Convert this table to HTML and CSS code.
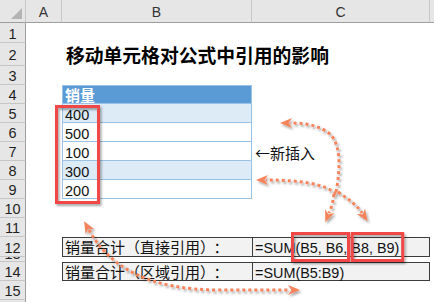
FILE: index.html
```html
<!DOCTYPE html>
<html lang="zh-CN">
<head>
<meta charset="utf-8">
<title>移动单元格对公式中引用的影响</title>
<link rel="stylesheet" href="styles.css">
</head>
<body>
<div class="sheet">
  <div class="corner"></div><div class="ch">A</div><div class="ch">B</div><div class="ch">C</div><div class="ch end"></div>

  <div class="rh">1</div><div class="c"></div><div class="c"></div><div class="c"></div><div class="c"></div>
  <div class="rh">2</div><div class="c"></div><div class="c title-cell"><span class="title">移动单元格对公式中引用的影响</span></div><div class="c"></div><div class="c"></div>
  <div class="rh">3</div><div class="c"></div><div class="c"></div><div class="c"></div><div class="c"></div>
  <div class="rh">4</div><div class="c"></div><div class="c tb th">销量</div><div class="c"></div><div class="c"></div>
  <div class="rh">5</div><div class="c"></div><div class="c tb band v">400</div><div class="c"></div><div class="c"></div>
  <div class="rh">6</div><div class="c"></div><div class="c tb v">500</div><div class="c"></div><div class="c"></div>
  <div class="rh">7</div><div class="c"></div><div class="c tb v">100</div><div class="c note">←新插入</div><div class="c"></div>
  <div class="rh">8</div><div class="c"></div><div class="c tb band v">300</div><div class="c"></div><div class="c"></div>
  <div class="rh">9</div><div class="c"></div><div class="c tb v">200</div><div class="c"></div><div class="c"></div>
  <div class="rh">10</div><div class="c"></div><div class="c"></div><div class="c"></div><div class="c"></div>
  <div class="rh">11</div><div class="c"></div><div class="c"></div><div class="c"></div><div class="c"></div>
  <div class="rh">12</div><div class="c"></div><div class="c sb lbl">销量合计（直接引用）<span class="colon">：</span></div><div class="c sb sc f">=SUM(B5, B6, B8, B9)</div><div class="c"></div>
  <div class="rh tiny"><span>13</span></div><div class="c"></div><div class="c"></div><div class="c"></div><div class="c"></div>
  <div class="rh">14</div><div class="c"></div><div class="c sb lbl">销量合计（区域引用）<span class="colon">：</span></div><div class="c sb sc f">=SUM(B5:B9)</div><div class="c"></div>
  <div class="rh">15</div><div class="c"></div><div class="c"></div><div class="c"></div><div class="c"></div>
  <div class="rh"></div><div class="c"></div><div class="c"></div><div class="c"></div><div class="c"></div>
</div>

<svg class="overlay" width="434" height="302" viewBox="0 0 434 302" aria-hidden="true">
  <defs>
    <filter id="sh" x="-20%" y="-20%" width="140%" height="140%">
      <feDropShadow dx="1.5" dy="2" stdDeviation="1.3" flood-color="#000" flood-opacity="0.35"/>
    </filter>
    <marker id="ah" viewBox="0 0 12 10" refX="2" refY="5" markerWidth="12" markerHeight="10" markerUnits="userSpaceOnUse" orient="auto-start-reverse">
      <path d="M0 0 L12 5 L0 10 L3.5 5 Z" fill="#f5845c"/>
    </marker>
  </defs>
  <g class="boxes" filter="url(#sh)">
    <rect x="56.5" y="106.5" width="42" height="96"/>
    <rect x="292.5" y="233.5" width="56" height="27"/>
    <rect x="352.2" y="233.5" width="50.5" height="27"/>
  </g>
  <g class="arrows" filter="url(#sh)">
    <path d="M336 192 C341 165, 341 140, 326 131 C314 124, 302 123, 290 123" marker-end="url(#ah)"/>
    <path d="M336 194 C326 184, 300 180, 266 180" marker-end="url(#ah)"/>
    <path d="M334 194 C333 203, 331 208, 329 213" marker-end="url(#ah)"/>
    <path d="M338 192 C348 199, 356 204, 362 213" marker-end="url(#ah)"/>
    <path d="M89 230 C110 268, 150 290, 220 290 L290 290" marker-start="url(#ah)" marker-end="url(#ah)"/>
  </g>
</svg>
</body>
</html>
```

FILE: styles.css
```css
* {
  box-sizing: border-box;
  margin: 0;
  padding: 0;
}

html, body {
  width: 434px;
  height: 302px;
  overflow: hidden;
  background: #ffffff;
}

body {
  position: relative;
  font-family: "Liberation Sans", "Noto Sans CJK SC", sans-serif;
  color: #111;
}

.sheet {
  display: grid;
  grid-template-columns: 26px 36px 190px 178px 1fr;
  grid-template-rows: 23px 20px 23px 19px 19px 19px 19px 19px 19px 19px 19px 19px 20px 5px 19px 19px 19px;
  width: 434px;
}

.corner {
  position: relative;
  background: #e6e6e6;
  border-right: 1px solid #c6c6c6;
  border-bottom: 1px solid #9e9e9e;
}

.corner::after {
  content: "";
  position: absolute;
  right: 3px;
  bottom: 3px;
  width: 11px;
  height: 11px;
  background: #b4b4b4;
  clip-path: polygon(100% 0, 100% 100%, 0 100%);
}

.ch {
  background: #e6e6e6;
  border-right: 1px solid #c6c6c6;
  border-bottom: 1px solid #9e9e9e;
  display: flex;
  align-items: center;
  justify-content: center;
  font-size: 14px;
  color: #333;
  padding-top: 2px;
}

.ch.end {
  border-right: none;
}

.rh {
  background: #e6e6e6;
  border-right: 1px solid #9e9e9e;
  border-bottom: 1px solid #c6c6c6;
  display: flex;
  align-items: center;
  justify-content: center;
  font-size: 14.5px;
  color: #1f1f1f;
  overflow: hidden;
  padding-top: 2px;
}

.rh.tiny {
  padding-top: 0;
  align-items: flex-start;
}

.rh.tiny span {
  display: block;
  line-height: 16px;
  margin-top: -11px;
}

.c {
  min-width: 0;
  white-space: nowrap;
}

.title-cell {
  display: flex;
  align-items: center;
  overflow: visible;
}

.title {
  font-family: "Noto Sans CJK SC", sans-serif;
  font-size: 18.8px;
  font-weight: bold;
  padding-left: 4px;
  color: #000;
}

.tb {
  border-left: 1px solid #9bc2e6;
  border-right: 1px solid #9bc2e6;
  border-bottom: 1px solid #9bc2e6;
}

.th {
  background: #5b9bd5;
  border-top: 1px solid #9bc2e6;
  color: #ffffff;
  font-family: "Noto Sans CJK SC", sans-serif;
  font-weight: bold;
  font-size: 15px;
  line-height: 17px;
  padding-left: 2px;
}

.band {
  background: #ddebf7;
}

.v {
  font-size: 14.5px;
  line-height: 18px;
  padding-top: 2px;
  padding-left: 2px;
}

.note {
  font-family: "Noto Sans CJK SC", sans-serif;
  font-size: 15px;
  line-height: 19px;
  padding-left: 3px;
  padding-top: 1px;
  color: #111;
}

.sb {
  background: #f2f2f2;
  border-top: 1px solid #3c3c3c;
  border-bottom: 1px solid #3c3c3c;
  border-left: 1px solid #3c3c3c;
}

.sc {
  border-right: 1px solid #3c3c3c;
}

.lbl {
  font-family: "Noto Sans CJK SC", sans-serif;
  font-size: 15px;
  line-height: 18px;
  padding-left: 2px;
}

.colon {
  margin-left: 6px;
}

.f {
  font-size: 14.4px;
  line-height: 18px;
  padding-left: 2px;
  padding-top: 1px;
}

.overlay {
  position: absolute;
  left: 0;
  top: 0;
  pointer-events: none;
}

.boxes rect {
  fill: none;
  stroke: #f04646;
  stroke-width: 3;
}

.arrows path {
  fill: none;
  stroke: #f5845c;
  stroke-width: 3;
  stroke-dasharray: 3 3;
}
```
